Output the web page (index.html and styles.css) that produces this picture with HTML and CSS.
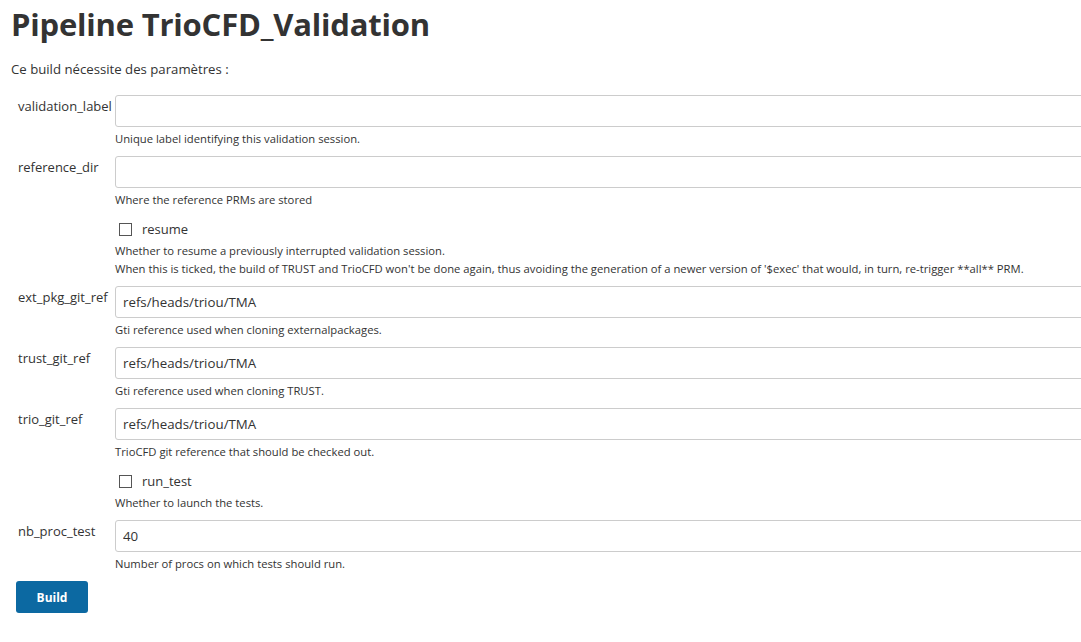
FILE: index.html
```html
<!DOCTYPE html>
<html lang="fr">
<head>
<meta charset="utf-8">
<title>Pipeline TrioCFD_Validation</title>
<link rel="stylesheet" href="styles.css">
</head>
<body>
<div class="page">
  <h1 class="title">Pipeline TrioCFD_Validation</h1>
  <p class="intro">Ce build nécessite des paramètres :</p>
  <form class="params">
    <div class="row">
      <label class="name">validation_label</label>
      <div class="field">
        <input class="text" type="text" value="">
        <div class="help">Unique label identifying this validation session.</div>
      </div>
    </div>
    <div class="row">
      <label class="name">reference_dir</label>
      <div class="field">
        <input class="text" type="text" value="">
        <div class="help">Where the reference PRMs are stored</div>
        <label class="check"><span class="box"></span>resume</label>
        <div class="help">Whether to resume a previously interrupted validation session.<br>When this is ticked, the build of TRUST and TrioCFD won't be done again, thus avoiding the generation of a newer version of '$exec' that would, in turn, re-trigger **all** PRM.</div>
      </div>
    </div>
    <div class="row">
      <label class="name">ext_pkg_git_ref</label>
      <div class="field">
        <input class="text" type="text" value="refs/heads/triou/TMA">
        <div class="help">Gti reference used when cloning externalpackages.</div>
      </div>
    </div>
    <div class="row">
      <label class="name">trust_git_ref</label>
      <div class="field">
        <input class="text" type="text" value="refs/heads/triou/TMA">
        <div class="help">Gti reference used when cloning TRUST.</div>
      </div>
    </div>
    <div class="row">
      <label class="name">trio_git_ref</label>
      <div class="field">
        <input class="text" type="text" value="refs/heads/triou/TMA">
        <div class="help">TrioCFD git reference that should be checked out.</div>
        <label class="check"><span class="box"></span>run_test</label>
        <div class="help">Whether to launch the tests.</div>
      </div>
    </div>
    <div class="row">
      <label class="name">nb_proc_test</label>
      <div class="field">
        <input class="text" type="text" value="40">
        <div class="help">Number of procs on which tests should run.</div>
      </div>
    </div>
    <button class="build" type="button">Build</button>
  </form>
</div>
</body>
</html>
```

FILE: styles.css
```css
html, body {
  margin: 0;
  padding: 0;
  background: #fff;
  overflow: hidden;
}
body {
  font-family: "Open Sans", "Noto Sans", sans-serif;
  color: #333;
}
.page {
  width: 1110px;
  padding: 0 0 0 11px;
}
.title {
  margin: 0;
  padding-top: 1px;
  font-size: 31px;
  line-height: 46px;
  font-weight: 700;
  color: #333;
  letter-spacing: -0.2px;
}
.intro {
  margin: 13px 0 0 0;
  font-size: 13.2px;
  line-height: 18px;
}
.params {
  margin-top: 17px;
}
.row {
  display: flex;
  margin-bottom: 8px;
}
.name {
  width: 104px;
  flex: none;
  padding: 2px 0 0 7px;
  box-sizing: border-box;
  font-size: 13px;
  line-height: 18px;
  white-space: nowrap;
}
.field {
  flex: 1;
  display: flex;
  flex-direction: column;
}
.text {
  height: 32px;
  box-sizing: border-box;
  width: 100%;
  border: 1px solid #ccc;
  border-radius: 3px;
  padding: 0 7px;
  font-family: inherit;
  font-size: 13.3px;
  color: #333;
  outline: none;
}
.help {
  margin-top: 3px;
  font-size: 11.25px;
  line-height: 18px;
  color: #333;
}
.check {
  display: flex;
  align-items: center;
  margin-top: 10px;
  height: 20px;
  padding-left: 4px;
  font-size: 13px;
}
.box {
  width: 11px;
  height: 11px;
  border: 1px solid #555;
  margin-right: 10px;
  background: #fff;
}
.build {
  margin: 0 0 0 5px;
  width: 72px;
  height: 32px;
  border: none;
  border-radius: 3px;
  background: #0c69a2;
  color: #fff;
  font-family: inherit;
  font-weight: 700;
  font-size: 12px;
}
```
